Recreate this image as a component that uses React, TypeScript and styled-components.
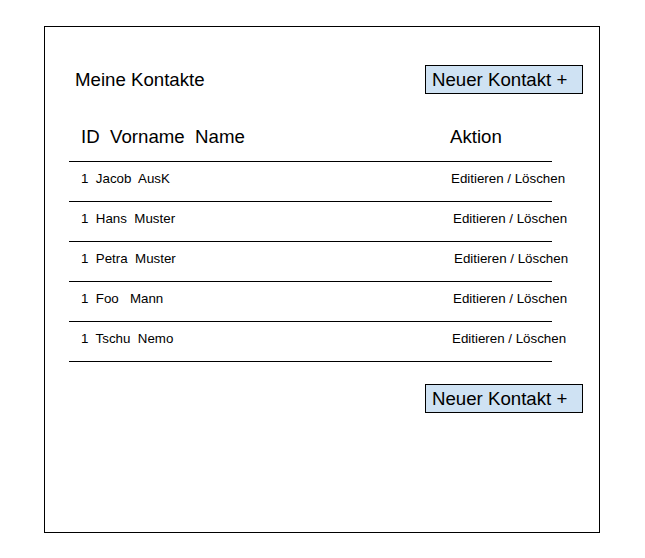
import React from 'react';
import styled, {createGlobalStyle} from 'styled-components';

const GlobalStyle = createGlobalStyle`
  html, body {
    margin: 0;
    padding: 0;
    background: #fff;
  }

  body {
    font-family: "Liberation Sans", Arial, sans-serif;
    color: #000;
  }
`;

const Page = styled.div`
  padding: 26px 0 0 44px;
`;

const Frame = styled.div`
  box-sizing: border-box;
  width: 556px;
  height: 507px;
  border: 1px solid #000;
  padding: 38px 16px 0 24px;
  display: flex;
  flex-direction: column;
`;

const TopBar = styled.div`
  display: flex;
  justify-content: space-between;
  align-items: center;
  padding-left: 6px;
`;

const Title = styled.h1`
  margin: 0;
  font-size: 18.67px;
  font-weight: normal;
  line-height: 22px;
`;

const AddButton = styled.button`
  box-sizing: border-box;
  width: 158px;
  height: 29px;
  padding: 0 0 0 6px;
  border: 1px solid #000;
  background: #cfe2f3;
  font-family: inherit;
  font-size: 18.67px;
  line-height: 27px;
  text-align: left;
  color: #000;
  cursor: pointer;
`;

const Table = styled.div`
  width: 483px;
  margin-top: 32px;
`;

const HeadRow = styled.div`
  display: grid;
  grid-template-columns: 369px auto;
  padding: 0 0 13px 12px;
  border-bottom: 1px solid #000;
  font-size: 18.67px;
  line-height: 22px;
  white-space: pre;
`;

const Row = styled.div`
  box-sizing: border-box;
  display: grid;
  grid-template-columns: 369px auto;
  height: 40px;
  padding: 9px 0 0 12px;
  border-bottom: 1px solid #000;
  font-size: 13.33px;
  line-height: 16px;
  white-space: pre;
`;

const Action = styled.span<{ $nudge: number }>`
  margin-left: ${p => p.$nudge}px;
`;

const Footer = styled.div`
  display: flex;
  justify-content: flex-end;
  margin-top: 22px;
`;

type Contact = {
  id: number;
  label: string;
  nudge: number;
};

const contacts: Contact[] = [
  {id: 1, label: 'Jacob  AusK', nudge: 1},
  {id: 1, label: 'Hans  Muster', nudge: 3},
  {id: 1, label: 'Petra  Muster', nudge: 4},
  {id: 1, label: 'Foo   Mann', nudge: 3},
  {id: 1, label: 'Tschu  Nemo', nudge: 2},
];

export default function App() {
  return (
    <>
      <GlobalStyle/>
      <Page>
        <Frame>
          <TopBar>
            <Title>Meine Kontakte</Title>
            <AddButton>Neuer Kontakt +</AddButton>
          </TopBar>
          <Table>
            <HeadRow>
              <span>{'ID  Vorname  Name'}</span>
              <span>Aktion</span>
            </HeadRow>
            {contacts.map((c, i) => (
              <Row key={i}>
                <span>{`${c.id}  ${c.label}`}</span>
                <Action $nudge={c.nudge}>Editieren / Löschen</Action>
              </Row>
            ))}
          </Table>
          <Footer>
            <AddButton>Neuer Kontakt +</AddButton>
          </Footer>
        </Frame>
      </Page>
    </>
  );
}
